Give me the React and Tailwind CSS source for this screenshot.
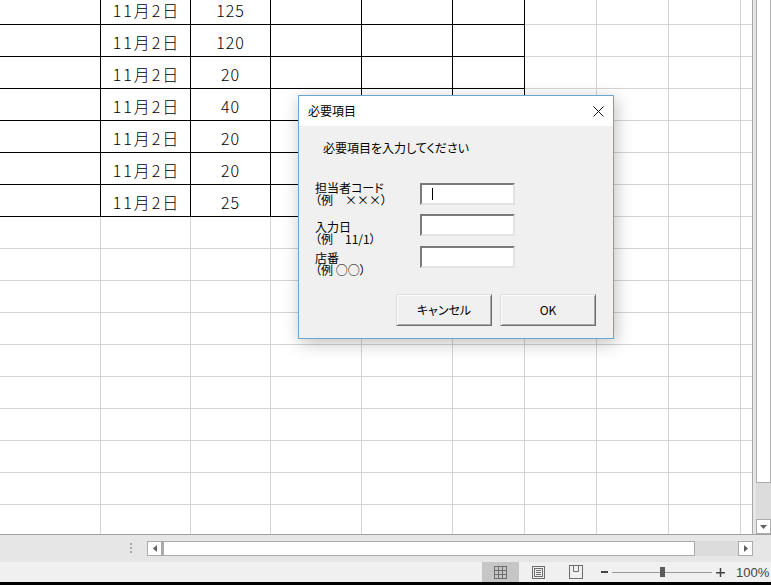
import React from 'react';

// sheet layout: column widths include the 1px right grid line
const COLS = [101, 90, 80, 91, 91, 72, 72, 72, 72, 11];
const ROWS = 17;

const rows = [
  ['11月2日', '125'],
  ['11月2日', '120'],
  ['11月2日', '20'],
  ['11月2日', '40'],
  ['11月2日', '20'],
  ['11月2日', '20'],
  ['11月2日', '25'],
];

const jp = "font-['Noto_Sans_CJK_JP',sans-serif]";

const Cell = ({ r, c }) => {
  const inTable = r < rows.length && c < 6;
  let text = '';
  if (r < rows.length && c === 1) text = rows[r][0];
  if (r < rows.length && c === 2) text = rows[r][1];
  return (
    <div
      className={`border-b ${c < COLS.length - 1 ? 'border-r' : ''} ${
        inTable ? 'border-black' : 'border-[#d4d4d4]'
      } flex items-center justify-center pt-[3px] text-[16px] leading-none font-light text-black ${
        c === 1 ? 'tracking-[2px] pl-[2px]' : 'tracking-[1px]'
      } ${jp}`}
    >
      {text}
    </div>
  );
};

const Sheet = () => (
  <div className="h-[534px] w-[752px] overflow-hidden bg-white">
    <div className="-mt-[7px] grid grid-cols-[101px_90px_80px_91px_91px_72px_72px_72px_72px_11px] auto-rows-[32px]">
      {Array.from({ length: ROWS }).map((_, r) =>
        COLS.map((_, c) => <Cell key={`${r}-${c}`} r={r} c={c} />)
      )}
    </div>
  </div>
);

const VScroll = () => (
  <div className="flex h-[534px] w-[19px] border-l border-[#a8a8a8] bg-[#e6e6e6] pl-[3px]">
    <div className="flex w-[15px] flex-col">
      <div className="h-[483px] border-x border-b border-[#ababab] bg-white" />
      <div className="h-[36px] bg-[#dcdcdc]" />
      <div className="flex h-[15px] items-center justify-center border border-[#ababab] bg-white">
        <svg width="7" height="4" viewBox="0 0 7 4">
          <path d="M0 0 L7 0 L3.5 4 Z" fill="#606060" />
        </svg>
      </div>
    </div>
  </div>
);

const HBar = () => (
  <div className="flex h-[28px] border-t border-[#a0a0a0] bg-[#e6e6e6] pt-[6px]">
    <div className="ml-[130px] flex h-[12px] w-[2px] flex-col justify-between pt-[2px]">
      <div className="h-[2px] w-[2px] bg-[#a8a8a8]" />
      <div className="h-[2px] w-[2px] bg-[#a8a8a8]" />
      <div className="h-[2px] w-[2px] bg-[#a8a8a8]" />
    </div>
    <div className="ml-[15px] flex h-[15px] w-[606px]">
      <div className="flex w-[15px] items-center justify-center border border-[#ababab] bg-white">
        <svg width="4" height="7" viewBox="0 0 4 7">
          <path d="M4 0 L4 7 L0 3.5 Z" fill="#606060" />
        </svg>
      </div>
      <div className="w-[533px] border border-l-2 border-[#ababab] bg-white" />
      <div className="flex-1 bg-[#dcdcdc]" />
      <div className="flex w-[15px] items-center justify-center border border-[#ababab] bg-white">
        <svg width="4" height="7" viewBox="0 0 4 7">
          <path d="M0 0 L0 7 L4 3.5 Z" fill="#606060" />
        </svg>
      </div>
    </div>
  </div>
);

const StatusBar = () => (
  <div className="flex h-[20px] items-center bg-[#f0f0f0] pl-[482px]">
    <div className="flex h-full w-[37px] items-center justify-center bg-[#c6c6c6]">
      <svg width="13" height="13" viewBox="0 0 13 13" fill="none" stroke="#6d6d6d">
        <rect x="0.5" y="0.5" width="12" height="12" />
        <path d="M4.5 0.5 V12.5 M8.5 0.5 V12.5 M0.5 4.5 H12.5 M0.5 8.5 H12.5" />
      </svg>
    </div>
    <div className="flex h-full w-[38px] items-center justify-center">
      <svg width="13" height="13" viewBox="0 0 13 13" fill="none" stroke="#6d6d6d">
        <rect x="0.5" y="0.5" width="12" height="12" />
        <rect x="2.5" y="2.5" width="8" height="8" />
        <path d="M4 4.5 H9 M4 6.5 H9 M4 8.5 H9" />
      </svg>
    </div>
    <div className="flex h-full w-[38px] items-center justify-center">
      <svg width="14" height="14" viewBox="0 0 14 14" fill="none" stroke="#6d6d6d">
        <rect x="0.5" y="0.5" width="13" height="13" />
        <path d="M4.5 0.5 V6.5 H9.5 V0.5" />
      </svg>
    </div>
    <svg className="ml-[6px]" width="7" height="2" viewBox="0 0 7 2">
      <rect width="7" height="2" fill="#444" />
    </svg>
    <div className="ml-[4px] flex items-center">
      <div className="h-px w-[48px] bg-[#9a9a9a]" />
      <div className="h-[10px] w-[5px] bg-[#5a5a5a]" />
      <div className="h-px w-[47px] bg-[#9a9a9a]" />
    </div>
    <svg className="ml-[4px]" width="9" height="9" viewBox="0 0 9 9">
      <path d="M0 4 H9 V5.5 H0 Z M3.75 0 H5.25 V9 H3.75 Z" fill="#444" />
    </svg>
    <span className="ml-[11px] font-['Liberation_Sans',sans-serif] text-[13px] leading-none text-[#444]">
      100%
    </span>
  </div>
);

const Field = ({ cursor, className = '' }) => (
  <div
    className={`flex h-[22px] w-[95px] items-center border-2 border-t-[#7a7a7a] border-l-[#7a7a7a] border-r-[#e3e3e3] border-b-[#e3e3e3] bg-white ${className}`}
  >
    {cursor && <div className="ml-[10px] h-[12px] w-px bg-black" />}
  </div>
);

const Button = ({ children, className = '' }) => (
  <button
    className={`flex h-[32px] w-[96px] items-center justify-center border border-t-[#dcdcdc] border-l-[#dcdcdc] border-r-[#6f6f6f] border-b-[#6f6f6f] bg-[#f0f0f0] text-[12px] text-black shadow-[inset_1px_1px_0_#ffffff,inset_-1px_-1px_0_#a8a8a8] ${className}`}
  >
    {children}
  </button>
);

const Label = ({ top, bottom, className = '' }) => (
  <div className={`text-[12px] leading-[12px] ${className}`}>
    <div className="h-[12px] leading-[12px]">{top}</div>
    <div className="h-[12px] leading-[12px]">{bottom}</div>
  </div>
);

const Dialog = () => (
  <div
    className={`absolute left-[298px] top-[95px] flex h-[244px] w-[316px] flex-col border border-[#6aa6d0] bg-[#f0f0f0] shadow-[2px_4px_16px_rgba(0,0,0,0.25)] ${jp} [font-feature-settings:'palt'] text-black`}
  >
    <div className="flex h-[30px] items-center justify-between bg-white pl-[9px] pr-[9px]">
      <span className="text-[12px] leading-none">必要項目</span>
      <svg width="11" height="11" viewBox="0 0 11 11" stroke="#111" strokeWidth="1">
        <path d="M0.5 0.5 L10.5 10.5 M10.5 0.5 L0.5 10.5" />
      </svg>
    </div>
    <div className="pl-[24px] pt-[16px] text-[12px] leading-[12px]">必要項目を入力してください</div>
    <div className="flex pl-[16px]">
      <div className="mt-[28px] flex w-[105px] flex-col">
        <Label top="担当者コード" bottom="（例　×××）" />
        <Label className="mt-[15px]" top="入力日" bottom="（例　11/1）" />
        <Label className="mt-[7px]" top="店番" bottom="（例 ○○）" />
      </div>
      <div className="mt-[29px] flex flex-col">
        <Field cursor />
        <Field className="mt-[9px]" />
        <Field className="mt-[10px]" />
      </div>
    </div>
    <div className="mt-[18px] flex justify-end gap-[8px] pr-[17px]">
      <Button>キャンセル</Button>
      <Button>OK</Button>
    </div>
  </div>
);

const App = () => (
  <div className="relative flex h-[585px] w-[771px] flex-col overflow-hidden bg-white">
    <div className="flex">
      <Sheet />
      <VScroll />
    </div>
    <HBar />
    <StatusBar />
    <div className="h-[3px] bg-black" />
    <Dialog />
  </div>
);

export default App;
